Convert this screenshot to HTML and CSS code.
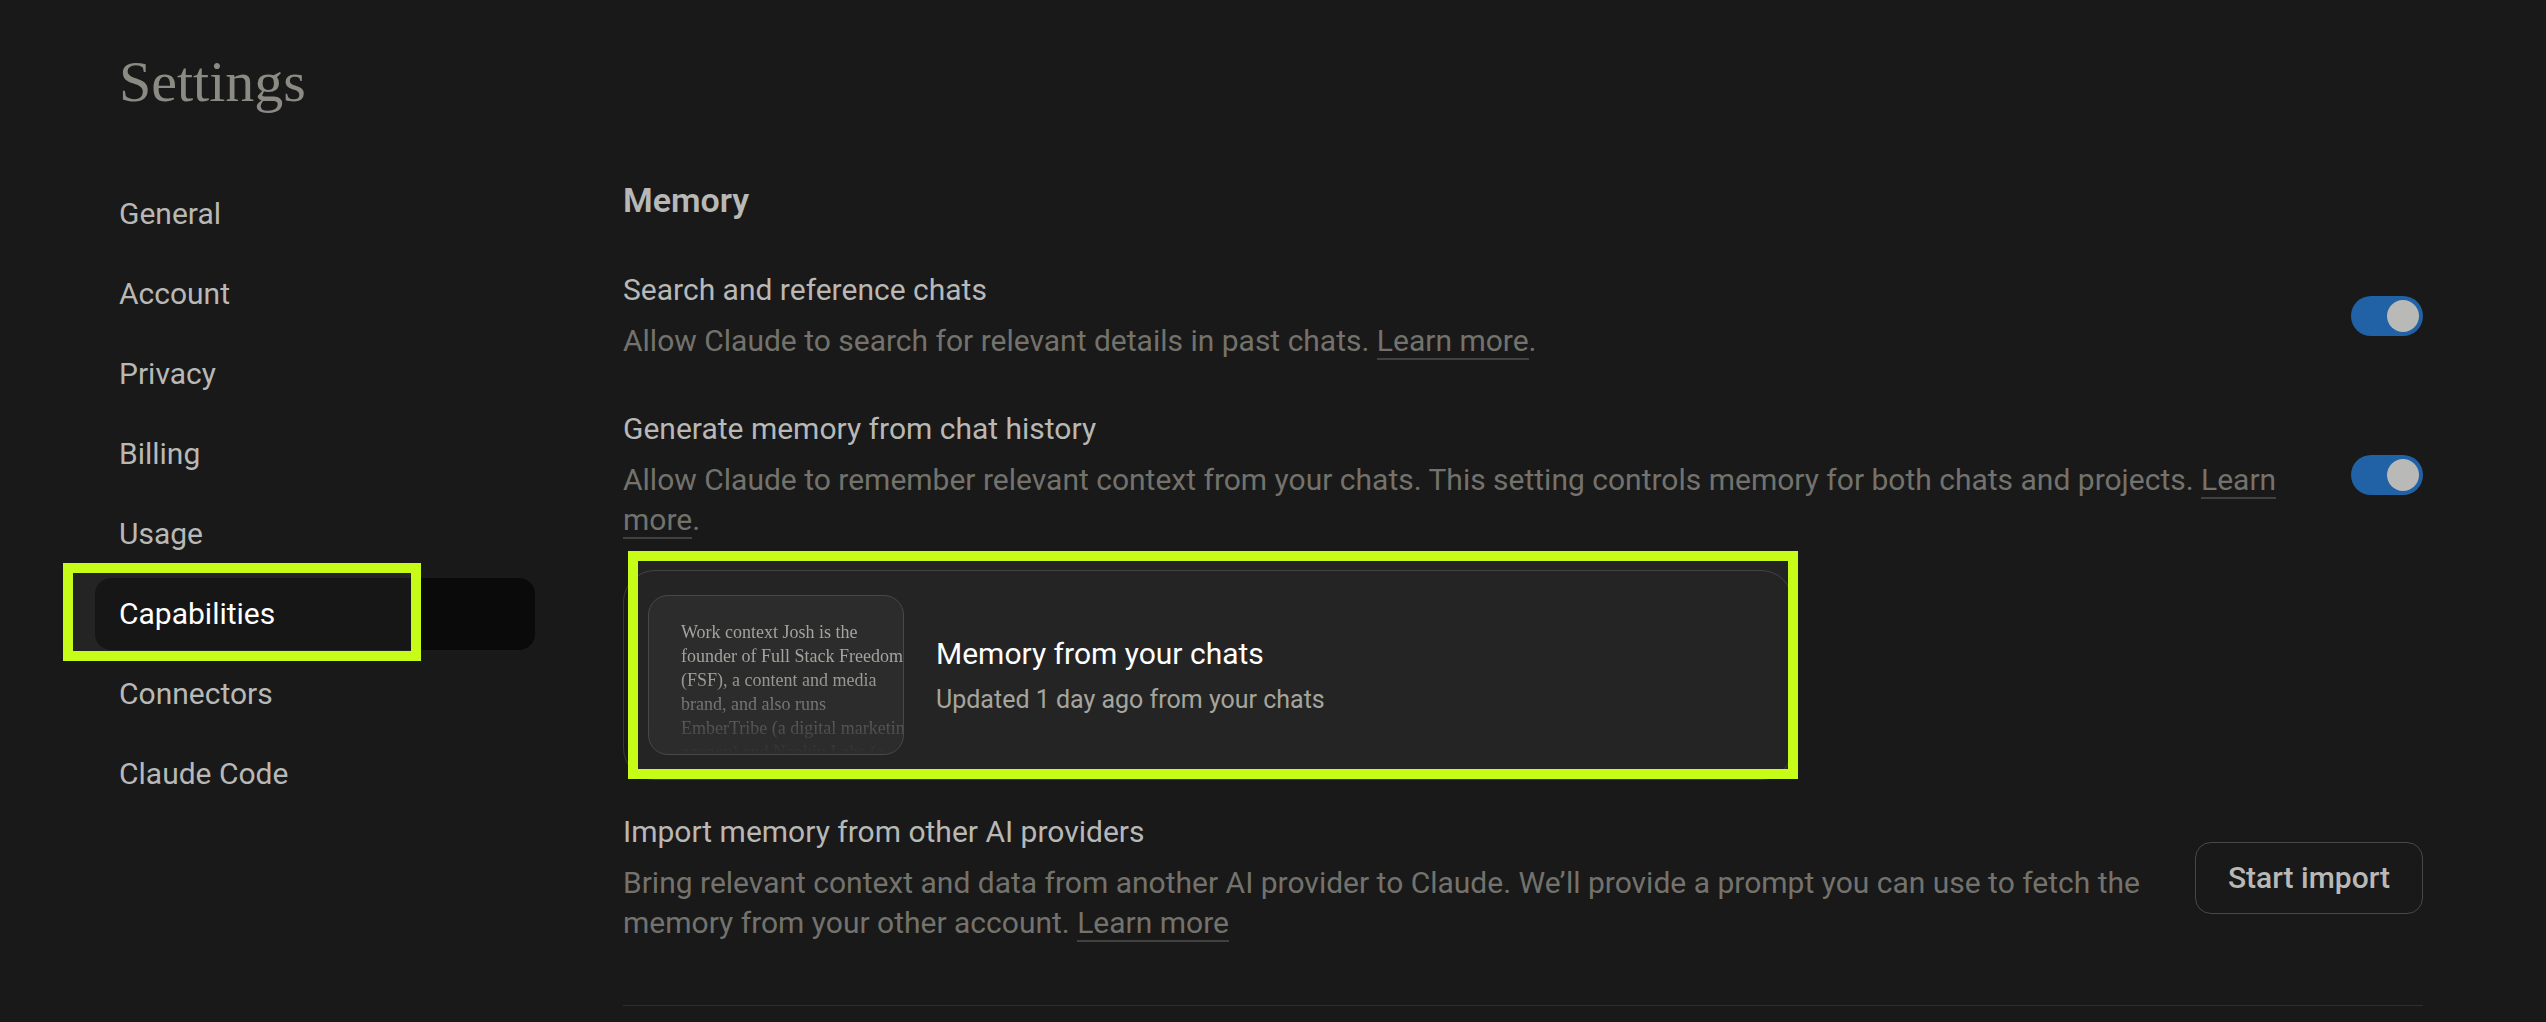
FILE: index.html
```html
<!DOCTYPE html>
<html lang="en">
<head>
<meta charset="utf-8">
<meta name="viewport" content="width=device-width, initial-scale=1">
<title>Settings</title>
<link rel="stylesheet" href="styles.css">
</head>
<body>
<div class="page">
  <h1 class="page-title">Settings</h1>
  <div class="layout">
    <nav class="nav" aria-label="Settings">
      <a class="nav-item" href="#general">General</a>
      <a class="nav-item" href="#account">Account</a>
      <a class="nav-item" href="#privacy">Privacy</a>
      <a class="nav-item" href="#billing">Billing</a>
      <a class="nav-item" href="#usage">Usage</a>
      <a class="nav-item nav-item-active" href="#capabilities" aria-current="page">Capabilities<span class="highlight highlight-nav"></span></a>
      <a class="nav-item" href="#connectors">Connectors</a>
      <a class="nav-item" href="#claude-code">Claude Code</a>
    </nav>
    <main class="content">
      <h2 class="section-title">Memory</h2>

      <div class="row">
        <div class="row-text">
          <label class="row-title" for="search-chats">Search and reference chats</label>
          <p class="row-desc">Allow Claude to search for relevant details in past chats. <a class="link" href="#search-help">Learn more</a>.</p>
        </div>
        <input class="toggle" type="checkbox" role="switch" id="search-chats" checked>
      </div>

      <div class="row">
        <div class="row-text">
          <label class="row-title" for="generate-memory">Generate memory from chat history</label>
          <p class="row-desc">Allow Claude to remember relevant context from your chats. This setting controls memory for both chats and projects. <a class="link" href="#memory-help">Learn more</a>.</p>
        </div>
        <input class="toggle" type="checkbox" role="switch" id="generate-memory" checked>
      </div>

      <button class="card" type="button">
        <span class="preview">
          <span class="preview-text">Work context Josh is the<br>founder of Full Stack Freedom<br>(FSF), a content and media<br>brand, and also runs<br>EmberTribe (a digital marketing<br>agency) and Napkin Labs (a</span>
        </span>
        <span class="card-text">
          <span class="card-title">Memory from your chats</span>
          <span class="card-meta">Updated 1 day ago from your chats</span>
        </span>
        <span class="highlight highlight-card"></span>
      </button>

      <div class="row row-import">
        <div class="row-text">
          <h3 class="row-title">Import memory from other AI providers</h3>
          <p class="row-desc">Bring relevant context and data from another AI provider to Claude. We’ll provide a prompt you can use to fetch the memory from your other account. <a class="link" href="#import-help">Learn more</a></p>
        </div>
        <button class="button" type="button">Start import</button>
      </div>
    </main>
  </div>
</div>
</body>
</html>
```
FILE: styles.css
```css
* {
  box-sizing: border-box;
}

body {
  margin: 0;
  background: #191919;
  color: #b8b8b6;
  font-family: Roboto, "Liberation Sans", sans-serif;
  font-size: 30px;
  line-height: 40px;
}

h1, h2, h3, p {
  margin: 0;
}

.page {
  padding: 50px 123px 0 95px;
}

.page-title {
  padding-left: 24px;
  color: #8b8a83;
  font-family: "Liberation Serif", serif;
  font-size: 58px;
  font-weight: 400;
  line-height: 64px;
}

.layout {
  display: grid;
  grid-template-columns: 440px minmax(0, 1fr);
  column-gap: 88px;
  padding-top: 64px;
}

/* Side navigation */
.nav {
  display: flex;
  flex-direction: column;
  gap: 8px;
}

.nav-item {
  position: relative;
  padding: 16px 24px;
  border-radius: 16px;
  color: inherit;
  text-decoration: none;
}

.nav-item-active {
  background: #0a0a0a;
  color: #fff;
}

/* Call-out frames laid over the page */
.highlight {
  position: absolute;
  border: 10px solid #c6fc17;
  background: rgba(255, 255, 255, 0.05);
  pointer-events: none;
}

.highlight-nav {
  top: -15px;
  bottom: -11px;
  left: -32px;
  width: 358px;
}

.highlight-card {
  top: -20px;
  right: -6px;
  bottom: 0;
  left: 4px;
}

/* Content */
.content {
  padding-top: 2px;
}

.section-title {
  font-size: 34px;
  font-weight: 600;
  line-height: 40px;
  margin-bottom: 50px;
}

.row {
  display: flex;
  align-items: center;
  gap: 48px;
}

.row + .row {
  margin-top: 48px;
}

.row-text {
  flex: 1;
  min-width: 0;
}

.row-title {
  display: block;
  margin-bottom: 11px;
  font-size: 30px;
  font-weight: 400;
}

.row-desc {
  color: #73726c;
}

.link {
  border-bottom: 2px solid #41413f;
  color: inherit;
  text-decoration: none;
}

.toggle {
  flex: none;
  width: 72px;
  height: 40px;
  margin: 0;
  padding: 4px;
  border-radius: 20px;
  background: #2a2a2a;
  appearance: none;
}

.toggle::before {
  content: "";
  display: block;
  width: 32px;
  height: 32px;
  border-radius: 50%;
  background: #b9b9b8;
}

.toggle:checked {
  background: #2062a5;
}

.toggle:checked::before {
  margin-left: auto;
}

.card {
  position: relative;
  display: flex;
  align-items: center;
  gap: 32px;
  width: 65%;
  margin: 30px 0 32px;
  padding: 24px;
  border: 1px solid #393939;
  border-radius: 32px;
  background: none;
  color: #fff;
  font: inherit;
  text-align: left;
}

.preview {
  width: 256px;
  height: 160px;
  padding: 24px 0 0 32px;
  overflow: hidden;
  border: 1px solid #3f3f3f;
  border-radius: 20px;
  background: #212121;
}

.preview-text {
  display: block;
  height: 134px;
  overflow: hidden;
  color: #a09f98;
  font-family: "Liberation Serif", serif;
  font-size: 18px;
  line-height: 24px;
  white-space: nowrap;
  mask-image: linear-gradient(#000 40%, transparent);
}

.card-text {
  padding-top: 4px;
}

.card-title,
.card-meta {
  display: block;
}

.card-meta {
  margin-top: 6px;
  color: #a2a198;
  font-size: 25px;
}

.row-import {
  padding-bottom: 62px;
  border-bottom: 1px solid #2e2e2d;
}

.button {
  flex: none;
  padding: 15px 32px;
  border: 1px solid #484847;
  border-radius: 16px;
  background: none;
  color: inherit;
  font: inherit;
  font-weight: 500;
}
```
